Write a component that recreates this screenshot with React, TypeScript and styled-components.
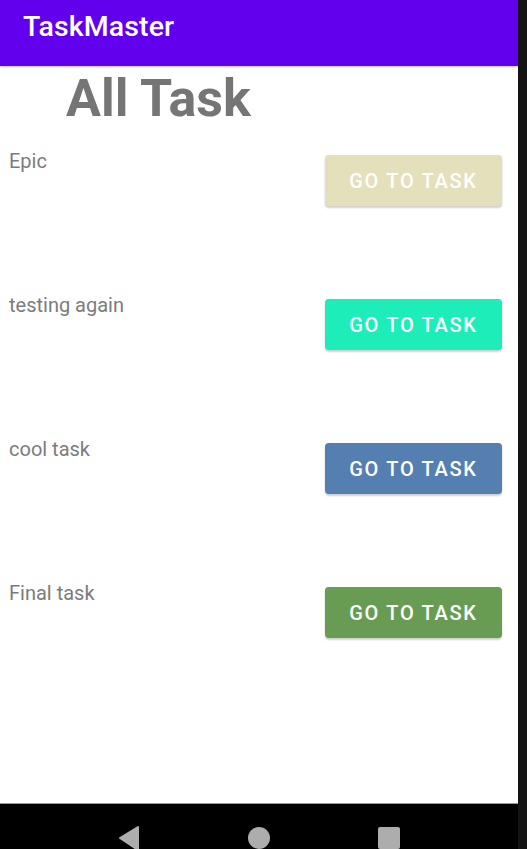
import React from "react";
import styled, { createGlobalStyle } from "styled-components";

const Global = createGlobalStyle`
  html, body { margin: 0; padding: 0; background: #141414; }
  body { font-family: Roboto, "Noto Sans", sans-serif; }
`;

const Frame = styled.div`
  display: flex;
  width: 527px;
  height: 849px;
  overflow: hidden;
  background: #141414;
`;

const Phone = styled.div`
  width: 518px;
  height: 849px;
  display: flex;
  flex-direction: column;
  background: #ffffff;
`;

const AppBar = styled.header`
  height: 66px;
  flex: none;
  background: #6200ee;
  display: flex;
  align-items: center;
  padding: 0 0 12px 23px;
  box-sizing: border-box;
  box-shadow: 0 1px 2px rgba(0, 0, 0, 0.25);
  position: relative;
  z-index: 1;
`;

const Title = styled.h1`
  margin: 0;
  color: #ffffff;
  font-family: Roboto, sans-serif;
  font-weight: 500;
  font-size: 28.5px;
  line-height: 32px;
  letter-spacing: 0.1px;
`;

const Content = styled.main`
  flex: 1;
  display: flex;
  flex-direction: column;
`;

const Heading = styled.h2`
  margin: 5px 0 0 66px;
  font-family: Roboto, sans-serif;
  font-weight: 700;
  font-size: 52px;
  line-height: 56px;
  color: #757575;
`;

const List = styled.div`
  margin-top: 23px;
  display: flex;
  flex-direction: column;
`;

const Row = styled.div`
  height: 144px;
  display: flex;
  justify-content: space-between;
  align-items: flex-start;
  padding: 0 16px 0 9px;
`;

const TaskName = styled.span`
  font-family: Roboto, sans-serif;
  font-size: 20px;
  line-height: 22px;
  color: #7c7c7c;
`;

const GoButton = styled.button<{ $bg: string }>`
  margin-top: 5px;
  width: 177px;
  height: 51px;
  border: none;
  border-radius: 4px;
  background: ${(p) => p.$bg};
  color: #ffffff;
  font-family: Roboto, sans-serif;
  font-weight: 500;
  font-size: 20px;
  letter-spacing: 1.7px;
  text-transform: uppercase;
  box-shadow: 0 2px 2px rgba(0, 0, 0, 0.18), 0 0 1px rgba(0, 0, 0, 0.12);
  cursor: pointer;
`;

const NavBar = styled.nav`
  height: 46px;
  flex: none;
  background: #000000;
  border-top: 1px solid #9a9a9a;
  display: flex;
  align-items: flex-start;
  justify-content: center;
  padding-top: 22px;
  box-sizing: border-box;
`;

const NavSlot = styled.div`
  width: 130px;
  display: flex;
  justify-content: center;
`;

const tasks = [
  { name: "Epic", color: "#e5e0bc" },
  { name: "testing again", color: "#1deeb9" },
  { name: "cool task", color: "#557fb0" },
  { name: "Final task", color: "#699c53" },
];

export default function App() {
  return (
    <>
      <Global />
      <Frame>
        <Phone>
          <AppBar>
            <Title>TaskMaster</Title>
          </AppBar>
          <Content>
            <Heading>All Task</Heading>
            <List>
              {tasks.map((t) => (
                <Row key={t.name}>
                  <TaskName>{t.name}</TaskName>
                  <GoButton $bg={t.color}>Go to task</GoButton>
                </Row>
              ))}
            </List>
          </Content>
          <NavBar>
            <NavSlot>
              <svg width="22" height="26" viewBox="0 0 22 26">
                <path d="M20 1 L2 12 L20 24 Z" fill="#adadad" stroke="#adadad" strokeWidth="2" strokeLinejoin="round" />
              </svg>
            </NavSlot>
            <NavSlot>
              <svg width="24" height="24" viewBox="0 0 24 24">
                <circle cx="12" cy="12" r="11" fill="#adadad" />
              </svg>
            </NavSlot>
            <NavSlot>
              <svg width="24" height="24" viewBox="0 0 24 24">
                <rect x="1" y="1" width="22" height="22" rx="2" fill="#adadad" />
              </svg>
            </NavSlot>
          </NavBar>
        </Phone>
      </Frame>
    </>
  );
}
